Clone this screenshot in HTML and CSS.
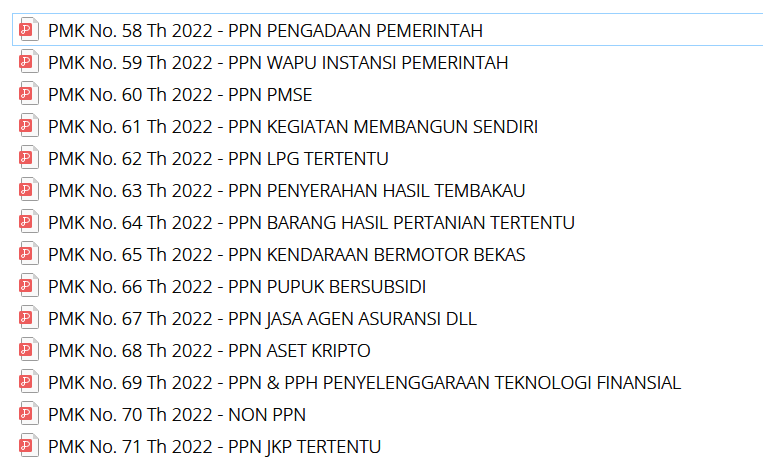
FILE: index.html
```
<!DOCTYPE html>
<html lang="id">

<head>
    <meta charset="utf-8">
    <title>PMK 2022</title>
    <meta name="viewport" content="width=device-width, initial-scale=1.0">
    <link rel="stylesheet" href="styles.css">
</head>

<body>

    <!-- pdf file icon, shared by all rows -->
    <svg class="sprite" width="0" height="0">
        <symbol id="pdf" viewBox="0 0 20 24">
            <path d="M3.5 .5H14L19.5 6V22.5Q19.5 23.5 18.5 23.5H3.5Q2.5 23.5 2.5 22.5V1.5Q2.5 .5 3.5 .5Z" fill="#f9f9f9" stroke="#9b9b9b" />
            <path d="M14 1L19 6H14Z" fill="#d2d2d2" />
            <rect x="0" y="6" width="13" height="13" rx="1.5" fill="#ed5c5c" />
            <path d="M4 8.5H7.5Q10.5 8.5 10.5 11T7.5 13.5H4.5Q2.5 13.5 2.5 15T4 16.5Q5.5 16.5 5.5 15V8.5" fill="none" stroke="#fff" />
        </symbol>
    </svg>

    <ul class="files">
        <li class="file focused"><svg class="icon"><use href="#pdf" /></svg><span class="name">PMK No. 58 Th 2022 - PPN PENGADAAN PEMERINTAH</span></li>
        <li class="file"><svg class="icon"><use href="#pdf" /></svg><span class="name">PMK No. 59 Th 2022 - PPN WAPU INSTANSI PEMERINTAH</span></li>
        <li class="file"><svg class="icon"><use href="#pdf" /></svg><span class="name">PMK No. 60 Th 2022 - PPN PMSE</span></li>
        <li class="file"><svg class="icon"><use href="#pdf" /></svg><span class="name">PMK No. 61 Th 2022 - PPN KEGIATAN MEMBANGUN SENDIRI</span></li>
        <li class="file"><svg class="icon"><use href="#pdf" /></svg><span class="name">PMK No. 62 Th 2022 - PPN LPG TERTENTU</span></li>
        <li class="file"><svg class="icon"><use href="#pdf" /></svg><span class="name">PMK No. 63 Th 2022 - PPN PENYERAHAN HASIL TEMBAKAU</span></li>
        <li class="file"><svg class="icon"><use href="#pdf" /></svg><span class="name">PMK No. 64 Th 2022 - PPN BARANG HASIL PERTANIAN TERTENTU</span></li>
        <li class="file"><svg class="icon"><use href="#pdf" /></svg><span class="name">PMK No. 65 Th 2022 - PPN KENDARAAN BERMOTOR BEKAS</span></li>
        <li class="file"><svg class="icon"><use href="#pdf" /></svg><span class="name">PMK No. 66 Th 2022 - PPN PUPUK BERSUBSIDI</span></li>
        <li class="file"><svg class="icon"><use href="#pdf" /></svg><span class="name">PMK No. 67 Th 2022 - PPN JASA AGEN ASURANSI DLL</span></li>
        <li class="file"><svg class="icon"><use href="#pdf" /></svg><span class="name">PMK No. 68 Th 2022 - PPN ASET KRIPTO</span></li>
        <li class="file"><svg class="icon"><use href="#pdf" /></svg><span class="name">PMK No. 69 Th 2022 - PPN &amp; PPH PENYELENGGARAAN TEKNOLOGI FINANSIAL</span></li>
        <li class="file"><svg class="icon"><use href="#pdf" /></svg><span class="name">PMK No. 70 Th 2022 - NON PPN</span></li>
        <li class="file"><svg class="icon"><use href="#pdf" /></svg><span class="name">PMK No. 71 Th 2022 - PPN JKP TERTENTU</span></li>
    </ul>

</body>

</html>
```

FILE: styles.css
```
body {
    margin: 0;
    padding: 13px 0 0 12px;
    background: white;
    color: black;
    font-family: "Segoe UI", "Open Sans", "Noto Sans", sans-serif;
    font-size: 18px;
    font-weight: 300;
    line-height: 26px;
}

.sprite {
    display: block;
}

.files {
    list-style: none;
    margin: 0;
    padding: 0;
}

.file {
    display: flex;
    align-items: flex-start;
    gap: 9px;
    padding: 3px 0 2px 6px;
    border: 1px solid transparent;
    border-right: none;
    /* neighbouring rows share one border line */
    margin-bottom: -1px;
}

.file.focused {
    border-color: #99d1ff;
}

.icon {
    flex: none;
    width: 20px;
    height: 24px;
}

/* darkens the thin strokes of the light weight */
.name {
    text-shadow: 0 0 0 black;
}
```
